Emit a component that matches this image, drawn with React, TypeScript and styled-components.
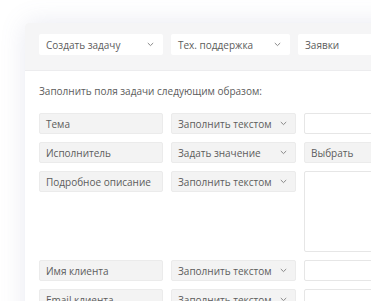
import React from "react";
import styled, { createGlobalStyle } from "styled-components";

const Global = createGlobalStyle`
  html, body { margin: 0; padding: 0; background: #fff; overflow: hidden; }
  body { font-family: "Open Sans", "Noto Sans", sans-serif; }
`;

const Page = styled.div`
  padding: 23px 0 0 25px;
  width: 500px;
`;

const Card = styled.div`
  width: 460px;
  background: #fff;
  border-radius: 4px 0 0 0;
  box-shadow: 0 0 26px rgba(110, 120, 170, 0.16);
`;

const HeaderBand = styled.div`
  display: flex;
  gap: 8px;
  padding: 11px 14px 15px;
  background: #f5f5f6;
  border-bottom: 1px solid #ececee;
  border-radius: 4px 0 0 0;
`;

const Body = styled.div`
  padding: 13px 14px 20px;
`;

const Intro = styled.div`
  font-size: 10px;
  line-height: 14px;
  color: #5c5c5c;
  margin-bottom: 15px;
`;

const Rows = styled.div`
  display: flex;
  flex-direction: column;
  gap: 8px;
`;

const Row = styled.div`
  display: grid;
  grid-template-columns: 124px 125px 200px;
  gap: 7px 8px;
  align-items: start;
`;

const Box = styled.div<{ $w?: number; $tone?: "white" | "gray"; $h?: number; $bordered?: boolean }>`
  box-sizing: border-box;
  height: ${(p) => p.$h ?? 21}px;
  ${(p) => (p.$w ? `width: ${p.$w}px;` : "")}
  display: flex;
  align-items: center;
  justify-content: space-between;
  padding: 0 8px 0 6px;
  border-radius: 2px;
  background: ${(p) => (p.$tone === "gray" ? "#f3f3f3" : "#fff")};
  border: 1px solid ${(p) => (p.$bordered ? (p.$tone === "gray" ? "#ebebeb" : "#e6e6e6") : "transparent")};
  font-size: 10px;
  color: #5c5c5c;
  white-space: nowrap;
  overflow: hidden;
`;

const Chevron = () => (
  <svg width="7" height="5" viewBox="0 0 7 5" style={{ flex: "none" }}>
    <path d="M0.8 1 L3.5 3.6 L6.2 1" fill="none" stroke="#888" strokeWidth="1" />
  </svg>
);

type Field = { label: string; mode: string; value?: string; tall?: boolean };

const fields: Field[] = [
  { label: "Тема", mode: "Заполнить текстом" },
  { label: "Исполнитель", mode: "Задать значение", value: "Выбрать" },
  { label: "Подробное описание", mode: "Заполнить текстом", tall: true },
  { label: "Имя клиента", mode: "Заполнить текстом" },
  { label: "Email клиента", mode: "Заполнить текстом" },
];

export default function App() {
  return (
    <>
      <Global />
      <Page>
        <Card>
          <HeaderBand>
            <Box $w={124}>
              <span>Создать задачу</span>
              <Chevron />
            </Box>
            <Box $w={119}>
              <span>Тех. поддержка</span>
              <Chevron />
            </Box>
            <Box $w={160}>
              <span>Заявки</span>
            </Box>
          </HeaderBand>
          <Body>
            <Intro>Заполнить поля задачи следующим образом:</Intro>
            <Rows>
              {fields.map((f) => (
                <Row key={f.label}>
                  <Box $tone="gray" $bordered>
                    <span>{f.label}</span>
                  </Box>
                  <Box $tone="gray" $bordered>
                    <span>{f.mode}</span>
                    <Chevron />
                  </Box>
                  {f.value ? (
                    <Box $tone="gray" $bordered>
                      <span>{f.value}</span>
                    </Box>
                  ) : (
                    <Box $bordered $h={f.tall ? 81 : 21} />
                  )}
                </Row>
              ))}
            </Rows>
          </Body>
        </Card>
      </Page>
    </>
  );
}
